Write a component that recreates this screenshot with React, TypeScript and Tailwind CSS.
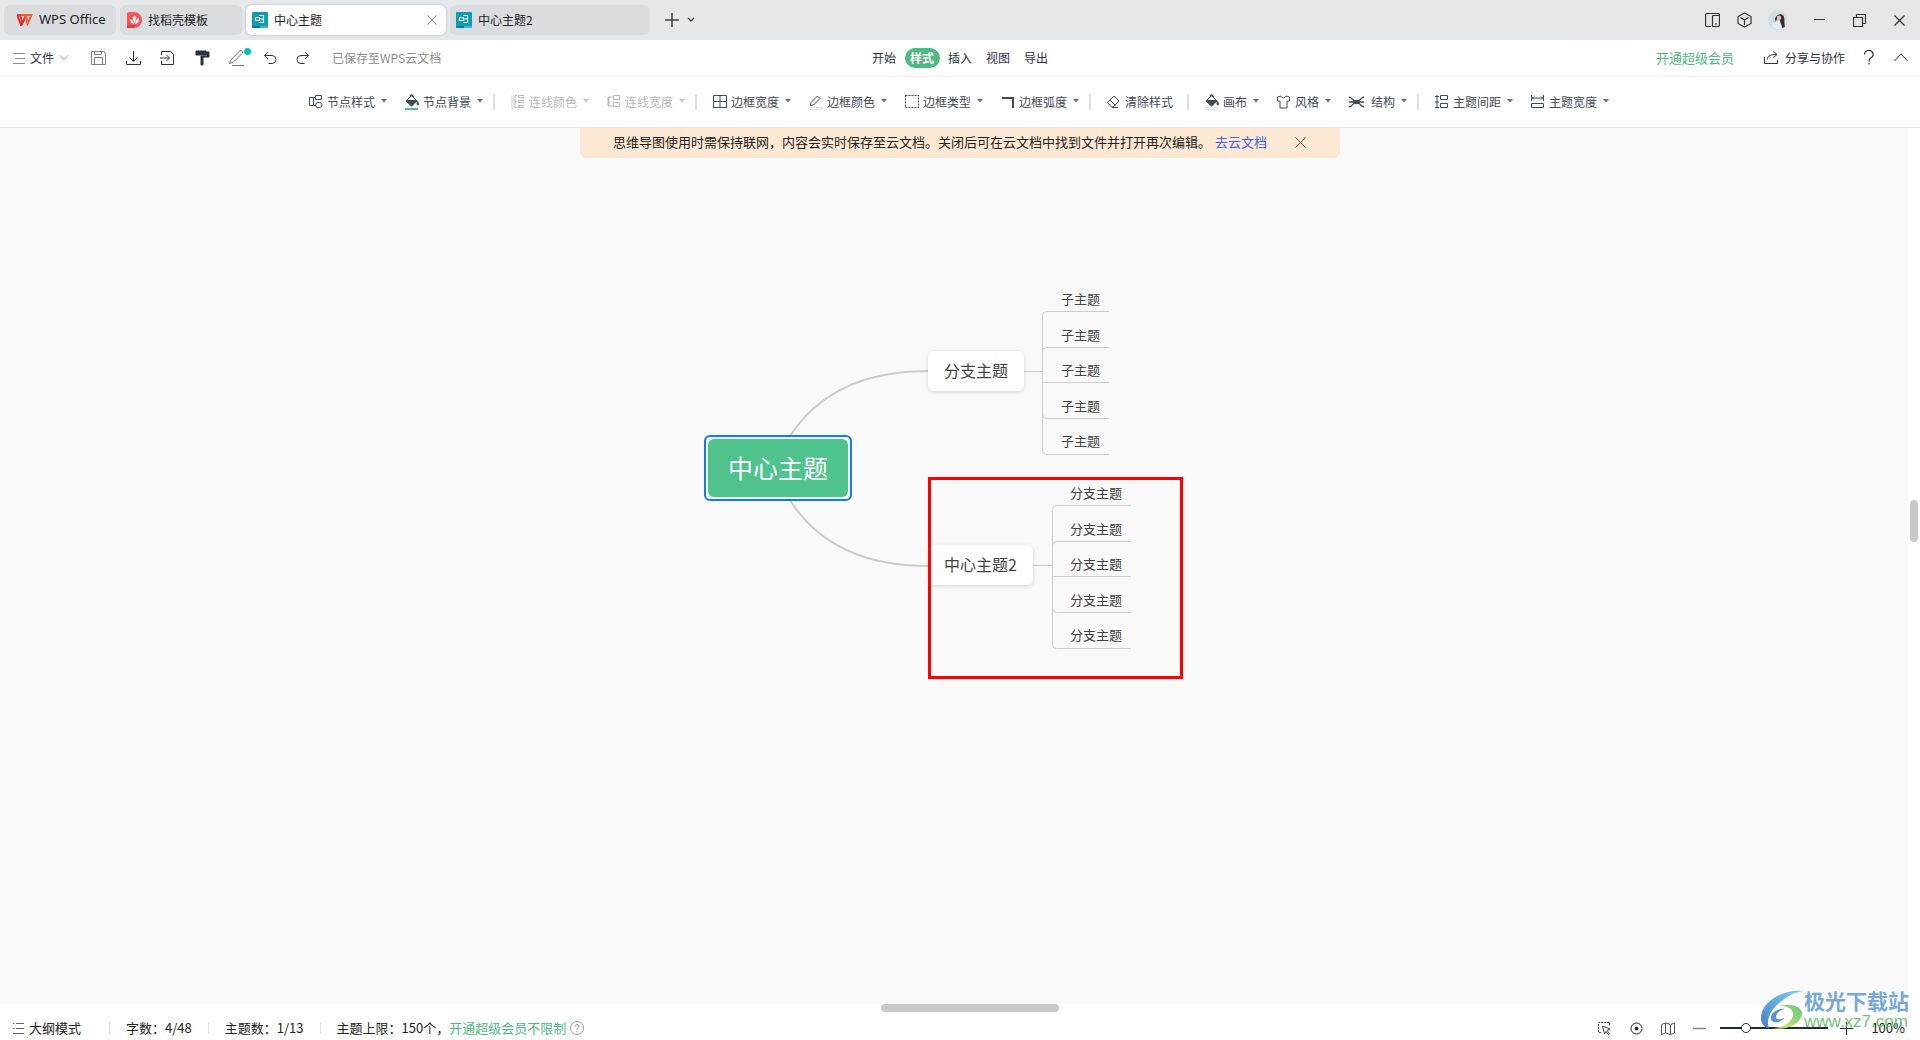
import type { ReactNode } from "react";
import clsx from "clsx";

interface IconProps {
  children: ReactNode;
  w?: number;
  h?: number;
  className?: string;
}

function Icon({ children, w = 16, h = 16, className }: IconProps) {
  return (
    <svg
      width={w}
      height={h}
      viewBox={`0 0 ${w} ${h}`}
      fill="none"
      stroke="currentColor"
      strokeWidth="1"
      className={clsx("shrink-0", className)}
      aria-hidden="true"
    >
      {children}
    </svg>
  );
}

function MapIcon() {
  return (
    <svg width="16" height="16" viewBox="0 0 16 16" className="shrink-0" aria-hidden="true">
      <rect width="16" height="16" rx="1" fill="#0b9db3" />
      <path d="M0 14h8v2H1a1 1 0 0 1-1-1z" fill="#067f92" />
      <path d="M8 14h8v1a1 1 0 0 1-1 1H8z" fill="#35b8c9" />
      <path d="M3.500 5.500h4v3h-4zM7.500 7h1M7 3.500h4.500V7H8.500M11.500 7v3.500H7" fill="none" stroke="#fff" strokeWidth="1.200" />
    </svg>
  );
}

const paintBucket = (
  <>
    <path d="M1 7 6.500 1.500 12 7l-5.500 5z" />
    <path d="M1.500 6.500h10L6.500 12zM5 2l2-1.500L9 3M12.500 7.500c1.500 2.500 1.500 3.500.5 3.500s-1.500-1-.5-3.500" fill="currentColor" />
  </>
);

interface Tool {
  label: string;
  icon: ReactNode;
  iconWidth?: number;
  disabled?: boolean;
  menu?: boolean;
}

const TOOL_GROUPS: Tool[][] = [
  [
    {
      label: "节点样式",
      icon: <path d="M.5 3.500h4v8h-4zM4.500 3.500h2M4.500 11.500h2M6.500 1.500h6v4h-6zM9 8.500h1.500a2.500 2.500 0 0 1 0 5H9a2.500 2.500 0 0 1 0-5z" />,
    },
    {
      label: "节点背景",
      icon: (
        <>
          {paintBucket}
          <path d="M0 15h13" stroke="#4cbf86" strokeWidth="2" />
        </>
      ),
    },
  ],
  [
    {
      label: "连线颜色",
      disabled: true,
      icon: (
        <>
          <path d="M1.500 1v14" stroke="#e8e8e8" strokeWidth="3" />
          <path d="M4 1.500v12M4 1.500h2M4 7.500h2M4 13.500h2M13 1.500H7.500v2H13M13 6.500H7.500v2H13M13 11.500H7.500v2H13" />
        </>
      ),
    },
    {
      label: "连线宽度",
      disabled: true,
      icon: (
        <>
          <path d="M1.500 3v9" strokeWidth="2" />
          <path d="M1 3h5M1 12h5M6.500 1.500h6v4h-6zM6.500 8.500h6v4h-6z" />
        </>
      ),
    },
  ],
  [
    { label: "边框宽度", icon: <path d="M.5 1.500h13v12H.5zM7 1.500v12M.5 7.500h13M5 7.500h4" /> },
    {
      label: "边框颜色",
      icon: (
        <>
          <path d="M2 8.500 8.500 2 11 4.500 4.500 11l-3 .5z" />
          <path d="M.5 13.500h13v2H.5z" stroke="#e2e2e4" />
        </>
      ),
    },
    { label: "边框类型", icon: <path d="M.5 1.500h13v12H.5z" strokeDasharray="2 1" strokeWidth="1.200" /> },
    { label: "边框弧度", icon: <path d="M1 4h11v10" strokeWidth="2" /> },
  ],
  [
    {
      label: "清除样式",
      menu: false,
      icon: <path d="M.5 8.500 7 2l5 5-6 6H4.500zM3 6l5.500 5.500M5 13.500h6" />,
    },
  ],
  [
    {
      label: "画布",
      icon: (
        <>
          {paintBucket}
          <path d="M.5 13.500h12v2H.5z" stroke="#e2e2e4" fill="#fff" />
        </>
      ),
    },
    { label: "风格", icon: <path d="M4 2 .5 3v4H3v7h7V7h2.500V3L9 2c-.5 2.500-4.500 2.500-5 0z" /> },
    {
      label: "结构",
      iconWidth: 20,
      icon: (
        <>
          <path d="M5 6.500h5v3H5z" fill="currentColor" />
          <path d="M0 3c3 0 4 4 6 4M0 13c3 0 4-4 6-4M15 3c-3 0-4 4-6 4M15 13c-3 0-4-4-6-4M0 8h15" strokeWidth="1.300" />
        </>
      ),
    },
  ],
  [
    {
      label: "主题间距",
      icon: <path d="M2 1v13M0 2.500h4M0 8h4M0 13.500h4M5.500 1.500h7v4h-7zM5.500 9.500h7v4h-7z" />,
    },
    {
      label: "主题宽度",
      icon: <path d="M.5 1v6M12.500 1v6M.5 4h12M3 2.500 1.500 4 3 5.500M10 2.500 11.500 4 10 5.500M.5 9.500h12v4H.5z" />,
    },
  ],
];

const MENUS = ["开始", "样式", "插入", "视图", "导出"];

function TitleBar() {
  return (
    <header className="flex h-10 items-center bg-linear-to-r from-[#e5e9ec] to-[#e5e5ea] pl-1 text-xs text-[#222]">
      <div className="flex flex-1 items-center gap-1">
        <button type="button" className="flex h-[30px] w-28 items-center gap-1.5 rounded-md bg-[#dadde0] pl-3 font-['Noto_Sans'] text-[13px]">
          <svg width="17" height="12" viewBox="0 0 17 12" fill="none" aria-hidden="true">
            <path d="M1 1h3l2.500 8L10 1h3" stroke="#f6352c" strokeWidth="2" />
            <path d="M5 1h5l1.500 9L15.500 1H11" stroke="#fb5a30" strokeWidth="2" />
            <path d="M1.500 1.500 5 11l3-5" stroke="#ee2526" strokeWidth="2" />
          </svg>
          WPS Office
        </button>
        <button type="button" className="flex h-[30px] w-[122px] items-center gap-1.5 rounded-md bg-[#dadde0] pl-[7px]">
          <svg width="15" height="16" viewBox="0 0 15 16" aria-hidden="true">
            <path d="M0 2a2 2 0 0 1 2-2h5a8 8 0 0 1 0 16H0z" fill="#f2585b" />
            <path d="M0 13h10l-3 3H0z" fill="#dd4046" />
            <path d="M7.500 3c2 2 1.500 5 0 8-1.500-3-2-6 0-8zM3.500 7c2 .5 3 2 3.500 5-2.500-.5-4-2-3.500-5zM12 6c-2 .5-3.500 2-4 6 3-.5 4.500-3 4-6z" fill="#fff" />
          </svg>
          找稻壳模板
        </button>
        <button type="button" className="flex h-[30px] w-[200px] items-center gap-1.5 rounded-md bg-white pr-[9px] pl-1.5 shadow-[0_0_3px_#b4b8bc]">
          <MapIcon />
          <span className="flex-1 text-left">中心主题</span>
          <Icon w={10} h={10} className="text-[#888]">
            <path d="m.5.5 9 9M9.500.5l-9 9" />
          </Icon>
        </button>
        <button type="button" className="flex h-[30px] w-[200px] items-center gap-1.5 rounded-md bg-[#dadde0] pl-1.5">
          <MapIcon />
          中心主题2
        </button>
        <button type="button" aria-label="新建" className="ml-[11px]">
          <Icon w={14} h={14} className="text-[#444]">
            <path d="M7 0v14M0 7h14" strokeWidth="1.600" />
          </Icon>
        </button>
        <button type="button" aria-label="标签列表" className="ml-1">
          <Icon w={8} h={6} className="text-[#444]">
            <path d="m1 1 3 3 3-3" strokeWidth="1.300" />
          </Icon>
        </button>
      </div>
      <div className="flex items-center pr-[15px] text-[#333]">
        <button type="button" aria-label="侧栏" className="mr-[17px]">
          <Icon w={15} h={14}>
            <path d="M6 13.500H2A1.500 1.500 0 0 1 .5 12V2A1.500 1.500 0 0 1 2 .5h11A1.500 1.500 0 0 1 14.500 2v10a1.500 1.500 0 0 1-1.500 1.500H8.500A1 1 0 0 1 7.500 12.500v-9a1 1 0 0 1 1-1h6M10 11h2" strokeWidth="1.200" />
          </Icon>
        </button>
        <button type="button" aria-label="应用" className="mr-4">
          <Icon w={15} h={16}>
            <path d="m7.500 1 6.500 3.500v7L7.500 15 1 11.500v-7zM3.500 5.500l4 2.500 4-2.500M7.500 8v5" strokeWidth="1.200" />
          </Icon>
        </button>
        <button type="button" aria-label="账号" className="mr-[26px]">
          <svg width="20" height="20" viewBox="0 0 20 20" aria-hidden="true">
            <circle cx="10" cy="10" r="10" fill="#cfdfe3" />
            <path d="M7 9c1-4 5-6 8-4 2 2 1 7 2 12l-3 1c0-4-2-5-2-8z" fill="#3a2a32" />
            <path d="M9 6c3-1 5 0 4 3l-2 2-2-1z" fill="#e3bdb2" />
            <path d="M5 13l5-2 3 4v4a9 9 0 0 1-9-3z" fill="#e4eef0" />
            <path d="M7 8l2 1-1.500 3z" fill="#3a2a32" />
            <path d="M13 4l3 1-1 1z" fill="#d9a05c" />
          </svg>
        </button>
        <button type="button" aria-label="最小化" className="mr-7">
          <Icon w={11} h={12}>
            <path d="M0 5.500h11" />
          </Icon>
        </button>
        <button type="button" aria-label="还原" className="mr-7">
          <Icon w={13} h={13}>
            <path d="M.5 3.500h9v9h-9zM3.500 3.500v-3h9v9h-3" strokeWidth="1.200" />
          </Icon>
        </button>
        <button type="button" aria-label="关闭">
          <Icon w={11} h={11}>
            <path d="m.5.5 10 10M10.500.5l-10 10" strokeWidth="1.200" />
          </Icon>
        </button>
      </div>
    </header>
  );
}

function MenuBar() {
  return (
    <div className="flex h-[37px] items-center border-b border-[#f0f0f0] bg-white text-xs text-[#2b3240]">
      <div className="flex flex-1 items-center pl-3">
        <button type="button" className="mr-[22px] flex items-center gap-[5px]">
          <Icon w={13} h={12} className="text-[#8a8f96]">
            <path d="M1 1.500h12M3 6.500h10M1 11.500h12" />
          </Icon>
          文件
          <Icon w={10} h={6} className="text-[#999]">
            <path d="m1 .5 4 4 4-4" />
          </Icon>
        </button>
        <button type="button" aria-label="保存" className="mr-5">
          <Icon w={15} className="text-[#7a7f88]">
            <path d="M.5 1.500h12l2 2v11H.5zM3.500 14.500v-7h8v7M3.500 1.500v3h7v-3" />
          </Icon>
        </button>
        <button type="button" aria-label="下载" className="mr-[19px]">
          <Icon w={15}>
            <path d="M7.500 1v10M3.500 7.500l4 4 4-4M.5 11v3.500h14V11" />
          </Icon>
        </button>
        <button type="button" aria-label="导入" className="mr-5">
          <Icon w={15}>
            <path d="M1.500 5V1.500h9l3 3v10h-12V11M0 8h9M6.500 5 9.500 8l-3 3" />
          </Icon>
        </button>
        <button type="button" aria-label="格式刷" className="mr-[19px]">
          <Icon w={15}>
            <path d="M1 1h10v4H1zM11 2h3v5H8v8H6V6h6V4h-1z" fill="currentColor" />
          </Icon>
        </button>
        <button type="button" aria-label="画笔" className="relative mr-[19px]">
          <Icon w={15} className="text-[#6d727b]">
            <path d="m1.500 10.500 9-9.500q1.500-1 2.500 0t0 2.500L4 12.500l-3.500 1zM3 15.500h12" />
          </Icon>
          <span className="absolute -top-0.5 left-[15px] size-[7px] rounded-full bg-[#0bbcc4]" />
        </button>
        <button type="button" aria-label="撤销" className="mr-[19px]">
          <Icon w={14}>
            <path d="M5 2 1.500 5.500 5 9M1.500 5.500H9a4 4 0 0 1 0 8H5.500" />
          </Icon>
        </button>
        <button type="button" aria-label="恢复" className="mr-[22px]">
          <Icon w={14}>
            <path d="m9 2 3.500 3.500L9 9M12.500 5.500H5a4 4 0 0 0 0 8h3.500" />
          </Icon>
        </button>
        <span className="text-[#8c8c8c]">已保存至WPS云文档</span>
      </div>
      <nav className="flex items-center gap-[3px]">
        {MENUS.map((m) => (
          <button
            key={m}
            type="button"
            className={clsx(
              "h-5 w-[35px] rounded-full leading-5",
              m === "样式" && "bg-[#4fb883] font-bold text-white",
            )}
          >
            {m}
          </button>
        ))}
      </nav>
      <div className="flex flex-1 items-center justify-end pr-3">
        <button type="button" className="mr-[30px] text-[13px] text-[#4fb883]">
          开通超级会员
        </button>
        <button type="button" className="mr-[19px] flex items-center gap-1.5">
          <Icon w={15} h={13}>
            <path d="M.5 6v6.500h13V9M3 8.500C4 4.500 7 3.500 12.500 3.500M9.500.5l3.500 3-3.500 3" />
          </Icon>
          分享与协作
        </button>
        <button type="button" aria-label="帮助" className="mr-5">
          <Icon w={10} h={15}>
            <path d="M.5 4.500a4.300 4 0 1 1 6.500 3.300Q5 9 5 11.500M5 13v1.500" strokeWidth="1.200" />
          </Icon>
        </button>
        <button type="button" aria-label="收起">
          <Icon w={14} h={9}>
            <path d="m.5 8 6.500-7 6.500 7" />
          </Icon>
        </button>
      </div>
    </div>
  );
}

function Toolbar() {
  return (
    <div className="flex h-[51px] items-center justify-center border-b border-[#e2e4e6] bg-white pr-[3px] text-xs text-[#414a5a]">
      {TOOL_GROUPS.map((group, i) => (
        <div key={group[0].label} className="flex items-center">
          {i > 0 && (
            <span className={clsx("mr-[15px] h-4 w-0.5 bg-[#dcdee2]", i === 4 ? "ml-3.5" : "ml-2.5")} />
          )}
          <div className="flex items-center gap-[17px]">
            {group.map((t) => (
              <button
                key={t.label}
                type="button"
                disabled={t.disabled}
                className="flex items-center disabled:text-[#b5b8bd]"
              >
                <Icon w={t.iconWidth ?? 16} className="mr-0.5 ml-px">
                  {t.icon}
                </Icon>
                {t.label}
                {t.menu !== false && (
                  <Icon w={6} h={4} className="mb-0.5 ml-1.5 opacity-80">
                    <path d="M0 0h6L3 3.500z" fill="currentColor" stroke="none" />
                  </Icon>
                )}
              </button>
            ))}
          </div>
        </div>
      ))}
    </div>
  );
}

const CHILDREN = [0, 36, 71, 107, 143];

interface SubTopicsProps {
  label: string;
  className: string;
}

function SubTopics({ label, className }: SubTopicsProps) {
  return (
    <div
      className={clsx(
        "absolute flex h-[166px] flex-col justify-between text-[13px] leading-6 text-[#444]",
        className,
      )}
    >
      {CHILDREN.map((y) => (
        <span key={y}>{label}</span>
      ))}
    </div>
  );
}

function rail(x: number, top: number, end: number) {
  return CHILDREN.map((dy, i) => {
    const y = top + dy;
    if (i === 2) return `M${x} ${y}H${end}`;
    const bend = i < 2 ? 4 : -4;
    return `M${x} ${top + 59}V${y + bend}Q${x} ${y} ${x + 4} ${y}H${end}`;
  }).join("");
}

function MindMap() {
  return (
    <div className="absolute top-[152px] left-1/2 -ml-[250px] h-[400px] w-[480px]">
      <svg width="480" height="400" viewBox="0 0 480 400" fill="none" stroke="#ccc" className="absolute inset-0" aria-hidden="true">
        <path d="M70 188Q107 91 224 91M70 188Q107 286 224 286" strokeWidth="2" />
        <path d="M320 91.500h18.500M329 285.500h19.500" />
        <path d={rail(338.5, 31.5, 405)} />
        <path d={rail(348.5, 225.5, 427)} />
      </svg>
      <div className="absolute top-[155px] left-0 h-[66px] w-[148px] rounded-md border-2 border-[#0a7cf5] bg-[#f9f9f9] p-0.5">
        <div className="flex h-full items-center justify-center rounded-md bg-[#50c28b] text-[25px] text-white">
          中心主题
        </div>
      </div>
      <div className="absolute top-[71px] left-[224px] flex h-10 w-24 items-center justify-center rounded-md bg-white pb-0.5 text-base text-[#444] shadow-[0_1px_4px_#00000026]">
        分支主题
      </div>
      <div className="absolute top-[265px] left-[224px] flex h-10 w-[105px] items-center justify-center rounded-md bg-white pb-0.5 text-base text-[#444] shadow-[0_1px_4px_#00000026]">
        中心主题2
      </div>
      <SubTopics label="子主题" className="top-[7px] left-[357px]" />
      <SubTopics label="分支主题" className="top-[201px] left-[366px]" />
      <div className="absolute top-[197px] left-[224px] h-[202px] w-[255px] border-3 border-[#fe0000]" />
    </div>
  );
}

function Notice() {
  return (
    <div className="absolute top-0 left-1/2 flex h-[30px] w-[760px] -translate-x-1/2 items-center rounded-b-md bg-[#fde9d3] pb-0.5 pl-[33px] text-[13px] text-[#222]">
      思维导图使用时需保持联网，内容会实时保存至云文档。关闭后可在云文档中找到文件并打开再次编辑。
      <a href="#docs" className="ml-1 text-[#3b66f5]">
        去云文档
      </a>
      <button type="button" aria-label="关闭提示" className="ml-7">
        <Icon w={11} h={11} className="text-[#555]">
          <path d="m.5.5 10 10M10.500.5l-10 10" />
        </Icon>
      </button>
    </div>
  );
}

function Divider() {
  return <span className="h-3 w-px bg-[#dcdcdc]" />;
}

function StatusBar() {
  return (
    <footer className="flex h-6 items-center justify-between bg-white pr-[15px] pl-3 text-[13px] text-[#222]">
      <div className="flex items-center gap-4">
        <button type="button" className="mr-3 flex items-center gap-1">
          <Icon w={13} h={12} className="text-[#666]">
            <path d="M4 1.500h8M4 6.500h8M1 11.500h11M1 1.500h1.500M1 6.500h1.500" />
          </Icon>
          大纲模式
        </button>
        <Divider />
        <span>字数：4/48</span>
        <Divider />
        <span>主题数：1/13</span>
        <Divider />
        <span className="flex items-center">
          主题上限：150个，
          <a href="#vip" className="text-[#4fb883]">
            开通超级会员不限制
          </a>
          <Icon w={14} h={14} className="ml-1 text-[#999]">
            <circle cx="7" cy="7" r="6.500" />
            <path d="M5 5.500a2 2 0 1 1 2.800 1.800Q7 7.700 7 9M7 10v1" />
          </Icon>
        </span>
      </div>
      <div className="flex items-center">
        <button type="button" aria-label="框选" className="mr-[19px]">
          <Icon w={14} h={14} className="text-[#444]">
            <path d="M12.500 4V1.500H1.500v10H4" strokeDasharray="2 1" />
            <path d="m5.500 5 7.500 3-3 1.500 2.500 3-1 1L9 10.500 7.500 13z" />
          </Icon>
        </button>
        <button type="button" aria-label="定位" className="mr-[18px]">
          <Icon w={13} h={13}>
            <circle cx="6.500" cy="6.500" r="5.500" />
            <circle cx="6.500" cy="6.500" r="1.500" fill="currentColor" />
          </Icon>
        </button>
        <button type="button" aria-label="缩略图" className="mr-[18px]">
          <Icon w={14} h={13} className="text-[#555]">
            <path d="m.5 2.500 4-1.500 5 1.500L13.500 1v10l-4 1.500-5-1.500-4 1.500zM4.500 1v10M9.500 2.500v10" />
          </Icon>
        </button>
        <button type="button" aria-label="缩小" className="mr-3.5">
          <Icon w={13} h={12} className="text-[#888]">
            <path d="M0 6.500h13" strokeWidth="1.500" />
          </Icon>
        </button>
        <input
          type="range"
          aria-label="缩放"
          defaultValue={21}
          className="mr-3 h-3 w-[108px] appearance-none bg-transparent [&::-webkit-slider-runnable-track]:h-0.5 [&::-webkit-slider-runnable-track]:bg-[#222a35] [&::-webkit-slider-thumb]:-mt-1 [&::-webkit-slider-thumb]:size-2.5 [&::-webkit-slider-thumb]:appearance-none [&::-webkit-slider-thumb]:rounded-full [&::-webkit-slider-thumb]:border [&::-webkit-slider-thumb]:border-[#222a35] [&::-webkit-slider-thumb]:bg-white"
        />
        <button type="button" aria-label="放大" className="mr-[18px]">
          <Icon w={13} h={13}>
            <path d="M0 6.500h13M6.500 0v13" />
          </Icon>
        </button>
        <span>100%</span>
      </div>
    </footer>
  );
}

function Watermark() {
  return (
    <div className="pointer-events-none absolute right-[11px] bottom-2 flex items-end opacity-90">
      <svg width="44" height="42" viewBox="0 0 44 42" aria-hidden="true">
        <defs>
          <linearGradient id="wave" x1="0" y1="1" x2="1" y2="0">
            <stop offset="0" stopColor="#3a6fc0" />
            <stop offset="1" stopColor="#6ad0f8" />
          </linearGradient>
          <linearGradient id="leaf" x1="0" y1="1" x2="1" y2="0">
            <stop offset="0" stopColor="#e6e65a" />
            <stop offset="1" stopColor="#4fbf78" />
          </linearGradient>
        </defs>
        <path d="M44 1C22-1 1 12 1 28c0 5 3 9 8 11-3-10 1-20 14-29 6-5 12-8 21-9z" fill="url(#wave)" />
        <path d="M20 16c10-3 21 0 22 7 0 10-14 18-29 15 10 0 20-6 20-14 0-5-5-8-13-8z" fill="url(#leaf)" />
        <path d="M25 19c-8-1-15 4-14 10 1 5 10 4 13-1-4 2-8 2-8-1 0-4 4-7 9-8z" fill="#4b86cd" />
      </svg>
      <div className="flex flex-col">
        <span className="text-[21px] leading-6 font-bold text-[#6a9fd8]">极光下载站</span>
        <span className="font-['Liberation_Sans'] text-[17px] leading-5 text-[#62bd6c]">www.xz7.com</span>
      </div>
    </div>
  );
}

export default function App() {
  return (
    <div className="relative flex min-h-screen flex-col bg-white font-['Noto_Sans_CJK_SC',sans-serif]">
      <TitleBar />
      <MenuBar />
      <Toolbar />
      <main className="relative flex flex-1">
        <div className="relative flex-1 overflow-hidden bg-[#f9f9f9]">
          <MindMap />
        </div>
        <div className="flex w-3 flex-col items-center pt-[372px]">
          <span className="h-[42px] w-2 rounded-full bg-[#c9c9c9]" />
        </div>
        <Notice />
      </main>
      <div className="flex h-3 items-center justify-center pb-1 pl-5">
        <span className="h-2 w-[178px] rounded-full bg-[#c9c9c9]" />
      </div>
      <StatusBar />
      <Watermark />
    </div>
  );
}
